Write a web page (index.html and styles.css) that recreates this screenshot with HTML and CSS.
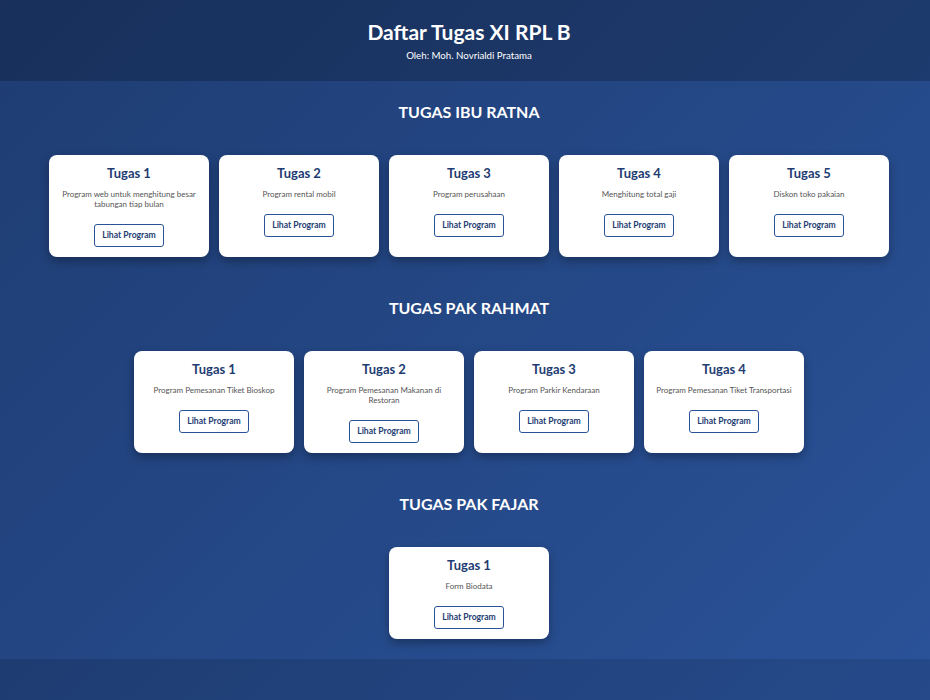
FILE: index.html
```html
<!DOCTYPE html>
<html lang="id">
<head>
<meta charset="utf-8">
<title>Daftar Tugas XI RPL B</title>
<link rel="stylesheet" href="styles.css">
</head>
<body>
<header class="header">
  <h1 class="title">Daftar Tugas XI RPL B</h1>
  <p class="subtitle">Oleh: Moh. Novrialdi Pratama</p>
</header>
<main class="main">
  <section class="section">
    <h2 class="section-title">TUGAS IBU RATNA</h2>
    <div class="cards">
      <div class="card"><h3 class="card-title">Tugas 1</h3><p class="card-desc">Program web untuk menghitung besar tabungan tiap bulan</p><a class="btn" href="#">Lihat Program</a></div>
      <div class="card"><h3 class="card-title">Tugas 2</h3><p class="card-desc">Program rental mobil</p><a class="btn" href="#">Lihat Program</a></div>
      <div class="card"><h3 class="card-title">Tugas 3</h3><p class="card-desc">Program perusahaan</p><a class="btn" href="#">Lihat Program</a></div>
      <div class="card"><h3 class="card-title">Tugas 4</h3><p class="card-desc">Menghitung total gaji</p><a class="btn" href="#">Lihat Program</a></div>
      <div class="card"><h3 class="card-title">Tugas 5</h3><p class="card-desc">Diskon toko pakaian</p><a class="btn" href="#">Lihat Program</a></div>
    </div>
  </section>
  <section class="section">
    <h2 class="section-title">TUGAS PAK RAHMAT</h2>
    <div class="cards">
      <div class="card"><h3 class="card-title">Tugas 1</h3><p class="card-desc">Program Pemesanan Tiket Bioskop</p><a class="btn" href="#">Lihat Program</a></div>
      <div class="card"><h3 class="card-title">Tugas 2</h3><p class="card-desc">Program Pemesanan Makanan di Restoran</p><a class="btn" href="#">Lihat Program</a></div>
      <div class="card"><h3 class="card-title">Tugas 3</h3><p class="card-desc">Program Parkir Kendaraan</p><a class="btn" href="#">Lihat Program</a></div>
      <div class="card"><h3 class="card-title">Tugas 4</h3><p class="card-desc">Program Pemesanan Tiket Transportasi</p><a class="btn" href="#">Lihat Program</a></div>
    </div>
  </section>
  <section class="section">
    <h2 class="section-title">TUGAS PAK FAJAR</h2>
    <div class="cards">
      <div class="card"><h3 class="card-title">Tugas 1</h3><p class="card-desc">Form Biodata</p><a class="btn" href="#">Lihat Program</a></div>
    </div>
  </section>
</main>
</body>
</html>
```

FILE: styles.css
```css
html {
  overflow: hidden;
}
body {
  margin: 0;
  width: 938px;
  font-family: Lato, "Noto Sans", sans-serif;
  background: linear-gradient(135deg, #1e3c72, #2a5298);
  color: #fff;
}
.header {
  background: rgba(0, 0, 0, 0.2);
  height: 81px;
  box-sizing: border-box;
  padding-top: 20px;
  text-align: center;
}
.title {
  margin: 0;
  font-size: 21px;
  line-height: 24px;
  font-weight: 700;
}
.subtitle {
  margin: 6px 0 0;
  font-size: 9.7px;
  line-height: 11px;
}
.section {
  padding: 21px 0 20px;
}
.section-title {
  margin: 0 0 33px;
  text-align: center;
  font-size: 16px;
  line-height: 20px;
  font-weight: 700;
}
.cards {
  display: flex;
  justify-content: center;
  gap: 10px;
}
.card {
  width: 160px;
  box-sizing: border-box;
  background: #fff;
  border-radius: 8px;
  box-shadow: 0 4px 10px rgba(0, 0, 0, 0.3);
  padding: 10px 12px 10px;
  text-align: center;
  display: flex;
  flex-direction: column;
  align-items: center;
}
.card-title {
  margin: 0;
  color: #1e3c72;
  font-size: 13px;
  line-height: 17px;
  font-weight: 700;
}
.card-desc {
  margin: 7px 0 15px;
  color: #555;
  font-size: 8px;
  line-height: 10px;
}
.btn {
  display: inline-block;
  box-sizing: border-box;
  height: 23px;
  padding: 0 7px;
  border: 1px solid #2a5298;
  border-radius: 3px;
  color: #1e3c72;
  font-size: 8.6px;
  line-height: 21px;
  font-weight: 700;
  text-decoration: none;
}
```
